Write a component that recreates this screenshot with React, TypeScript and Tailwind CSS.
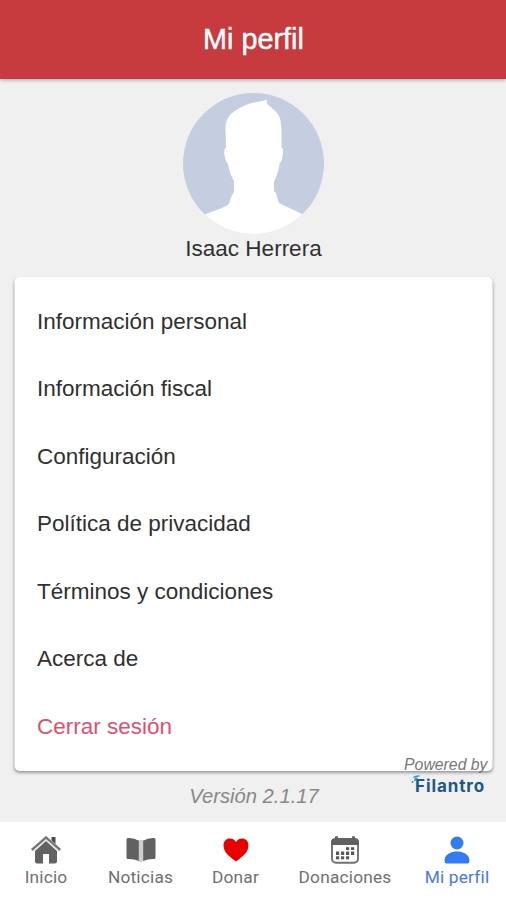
import type { ReactNode } from "react";

const options = [
  "Información personal",
  "Información fiscal",
  "Configuración",
  "Política de privacidad",
  "Términos y condiciones",
  "Acerca de",
];

function Avatar() {
  return (
    <svg className="h-[141px] w-[141px] rounded-full" viewBox="0 0 141 141">
      <rect width="141" height="141" fill="#c5cde0" />
      <path
        fill="#fff"
        d="M43 55 L42.500 35 C42.500 22 52 17 63 12 C70 9 78 9 84.500 6.500 C83 8.500 83.500 10 85 11.500 C88 15 94 18 96.500 24 C99 31 98.500 42 98.500 55 C101 55 100 59 99.500 63 C99 67 98 69 96.500 71 C95.500 78 94 83 91 88 L91 98 C94 100 94 105 96 110 C103 114 112 117 119 121 L141 141 L0 141 L22 121.500 C30 118 39 116 46 111 C47 107 48 103 51 99 L51 88 C48 83 46 77 45 71 C43 69 42 66 41.500 62 C41 58 41 55 43 55Z"
      />
    </svg>
  );
}

function HomeIcon() {
  return (
    <svg width="30" height="28" viewBox="0 0 30 28">
      <path d="M20.500 1h4v9L20.500 7z" fill="#4b4b4b" />
      <path d="M4 15 L15 5 L26 15 V25.500 Q26 27.500 24 27.500 H18 V18 H12 V27.500 H6 Q4 27.500 4 25.500Z" fill="#626262" />
      <path d="M.8 14.500 L15 2 L29.200 14.500" fill="none" stroke="#e2e2e2" strokeWidth="3.800" />
      <path d="M.8 13.800 L15 1.500 L29.200 13.800" fill="none" stroke="#747474" strokeWidth="2.200" />
    </svg>
  );
}

function BookIcon() {
  return (
    <svg width="30" height="28" viewBox="0 0 30 28">
      <path d="M12 4h6v21L15 26.500 12 25z" fill="#cecece" />
      <path d="M.5 3.500 Q.5 2 2 2 Q8.500 1.800 12.800 4.700 V25 Q8 22.800 2 23 Q.5 23 .5 21.500ZM29.500 3.500 Q29.500 2 28 2 Q21.500 1.800 17.200 4.700 V25 Q22 22.800 28 23 Q29.500 23 29.500 21.500Z" fill="#606060" />
    </svg>
  );
}

function HeartIcon() {
  return (
    <svg width="28" height="28" viewBox="0 0 28 28">
      <path d="M14 25.500 C10 22 1.500 17.500 1.500 9.500 C1.500 1.500 10.500 .5 14 6 C17.500 .5 26.500 1.500 26.500 9.500 C26.500 17.500 18 22 14 25.500Z" fill="#e60000" />
    </svg>
  );
}

function CalendarIcon() {
  return (
    <svg width="30" height="28" viewBox="0 0 30 28">
      <rect x="2" y="3" width="26" height="23.800" rx="4" fill="#fff" stroke="#707070" strokeWidth="1.900" />
      <path d="M1 9 V6 Q1 2.500 5 2.200 H25 Q29 2.500 29 6 V9Z" fill="#606060" />
      <path d="M6.500 .3v4M23.500 .3v4" stroke="#606060" strokeWidth="2.800" />
      <g fill="#555">
        <rect x="16" y="11.200" width="3.200" height="2.800" /><rect x="21" y="11.200" width="3.200" height="2.800" />
        <rect x="6" y="15.500" width="3.200" height="3.500" /><rect x="11" y="15.500" width="3.200" height="3.500" /><rect x="16" y="15.500" width="3.200" height="3.500" /><rect x="21" y="15.500" width="3.200" height="3.500" />
        <rect x="6" y="20.300" width="3.200" height="3" /><rect x="11" y="20.300" width="3.200" height="3" /><rect x="16" y="20.300" width="3.200" height="3" />
      </g>
    </svg>
  );
}

function PersonIcon() {
  return (
    <svg width="28" height="28" viewBox="0 0 28 28" fill="#337bf3">
      <circle cx="14" cy="7" r="6.500" />
      <path d="M1.500 25 C1.500 18 8 15.500 14 15.500 S26.500 18 26.500 25 Q26.500 27.500 24.500 27.500 H3.500 Q1.500 27.500 1.500 25Z" />
    </svg>
  );
}

function Tab({ width, label, active = false, children }: { width: string; label: string; active?: boolean; children: ReactNode }) {
  return (
    <a className={`flex shrink-0 flex-col items-center pt-3.5 ${width} ${active ? "text-[#4a75f5]" : "text-[#707070]"}`}>
      {children}
      <span className="mt-px whitespace-nowrap text-[17.3px] leading-6 tracking-[0.2px]">{label}</span>
    </a>
  );
}

export default function App() {
  return (
    <div className="flex h-[900px] w-[506px] flex-col overflow-hidden bg-[#f0f0f0] font-['Liberation_Sans',Arial,sans-serif] text-[#303030]">
      <header className="z-10 flex h-[79px] shrink-0 items-center justify-center bg-[#c73a3d] pb-px shadow-[0_1px_4px_rgba(0,0,0,0.3)]">
        <h1 className="pl-px text-[28.8px] leading-8 text-white [-webkit-text-stroke:0.4px_white]">Mi perfil</h1>
      </header>
      <main className="flex flex-1 flex-col items-center pt-3.5">
        <Avatar />
        <p className="h-[43px] pt-px pl-px text-[22.5px] leading-7">Isaac Herrera</p>
        <section className="relative h-[494px] w-[478px] translate-x-[0.5px] rounded-[5px] bg-white pt-[11px] pl-[22.5px] shadow-[0_2px_3px_rgba(0,0,0,0.35)]">
          {options.map((option) => (
            <div key={option} className="flex h-[67.5px] items-center text-[22.5px]">{option}</div>
          ))}
          <div className="flex h-[67.5px] items-center text-[22.5px] text-[#df506b]">Cerrar sesión</div>
          <div className="absolute top-[479px] right-[5px] text-[#777]">
            <p className="text-[15.8px] leading-[18px] whitespace-nowrap italic">Powered by</p>
            <div className="relative mt-0.5 ml-[11px] font-['Inter',sans-serif] text-[17px] leading-5 font-bold tracking-[0.9px] text-[#1c5787]">
              Filantro
              <svg className="absolute -top-px -left-[4px]" width="10" height="10" viewBox="0 0 10 10">
                <path d="M1 8V6M3.500 6V4Q4 3 6 3M2 2.500Q4 .8 8 1" fill="none" stroke="#2999d6" strokeWidth="1.600" />
              </svg>
            </div>
          </div>
        </section>
        <p className="mt-[13px] pl-0.5 text-[20.2px] leading-6 text-[#888] italic">Versión 2.1.17</p>
      </main>
      <nav className="flex h-[78px] shrink-0 bg-white font-['Roboto',sans-serif]">
        <Tab width="w-[92px]" label="Inicio"><HomeIcon /></Tab>
        <Tab width="w-[97px]" label="Noticias"><BookIcon /></Tab>
        <Tab width="w-[93px]" label="Donar"><HeartIcon /></Tab>
        <Tab width="w-[126px]" label="Donaciones"><CalendarIcon /></Tab>
        <Tab width="w-[98px]" label="Mi perfil" active><PersonIcon /></Tab>
      </nav>
    </div>
  );
}
